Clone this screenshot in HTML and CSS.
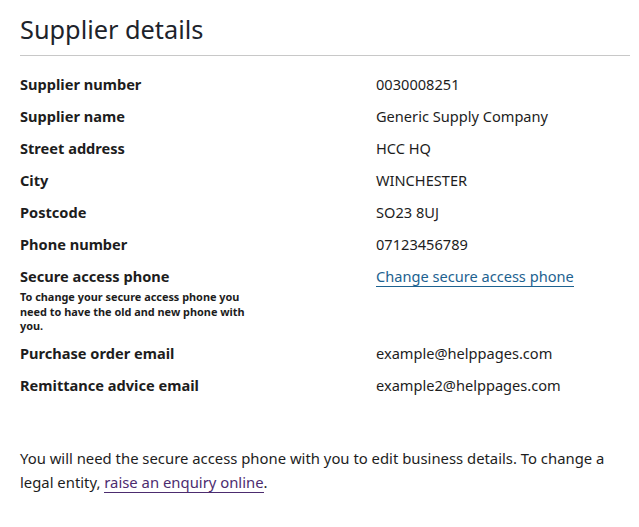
FILE: index.html
```html
<!DOCTYPE html>
<html>
<head>
<meta charset="utf-8">
<link rel="stylesheet" href="styles.css">
</head>
<body>
<main class="page">
  <h1 class="title">Supplier details</h1>
  <dl class="details">
    <div class="row"><dt>Supplier number</dt><dd>0030008251</dd></div>
    <div class="row"><dt>Supplier name</dt><dd>Generic Supply Company</dd></div>
    <div class="row"><dt>Street address</dt><dd>HCC HQ</dd></div>
    <div class="row"><dt>City</dt><dd>WINCHESTER</dd></div>
    <div class="row"><dt>Postcode</dt><dd>SO23 8UJ</dd></div>
    <div class="row"><dt>Phone number</dt><dd>07123456789</dd></div>
    <div class="row"><dt>Secure access phone<span class="hint">To change your secure access phone you need to have the old and new phone with you.</span></dt><dd><a class="link" href="#">Change secure access phone</a></dd></div>
    <div class="row"><dt>Purchase order email</dt><dd>example@helppages.com</dd></div>
    <div class="row"><dt>Remittance advice email</dt><dd>example2@helppages.com</dd></div>
  </dl>
  <p class="note">You will need the secure access phone with you to edit business details. To change a legal entity, <a class="visited" href="#">raise an enquiry online</a>.</p>
</main>
</body>
</html>
```
FILE: styles.css
```css
html, body { margin: 0; padding: 0; background: #fff; }
body { font-family: "Noto Sans", "Open Sans", sans-serif; color: #1d1d1d; }
.page { padding: 0 9px 0 20px; }
.title { font-size: 25.3px; font-weight: 400; margin: 0; padding-top: 11px; padding-bottom: 8px; border-bottom: 1px solid #c8c8c8; line-height: 36px; color: #1d232b; }
.details { margin: 17px 0 0; display: flex; flex-direction: column; }
.row { display: grid; grid-template-columns: 356px 1fr; padding: 0 0 10px; }
dt { font-weight: 700; font-size: 14.6px; line-height: 22px; }
dd { margin: 0; font-size: 14.6px; line-height: 22px; }
.hint { display: block; font-size: 10.9px; line-height: 14.5px; max-width: 240px; padding-top: 3px; margin-bottom: -2px; }
.link { color: #1d6290; text-decoration: none; border-bottom: 1px solid #1d6290; }
.note { margin: 40px 0 0; font-size: 14.85px; line-height: 24px; }
.visited { color: #4c2c6f; text-decoration: none; border-bottom: 1px solid #4c2c6f; }
```
